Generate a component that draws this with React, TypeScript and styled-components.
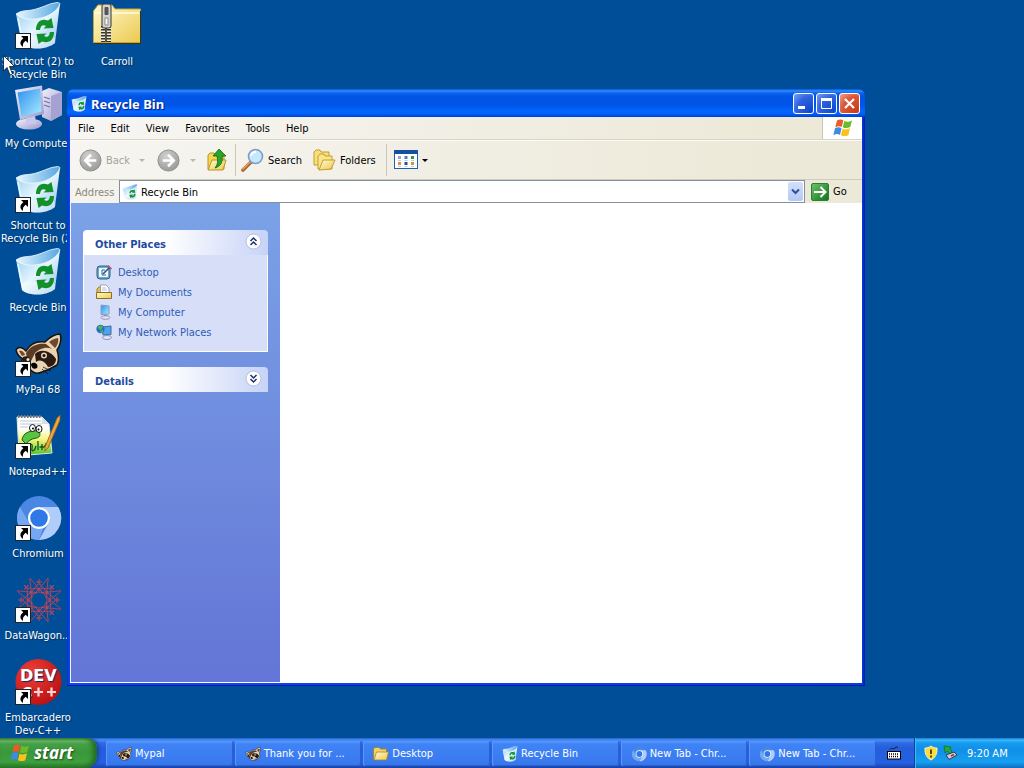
import React from "react";
import styled, { createGlobalStyle } from "styled-components";

const GlobalStyle = createGlobalStyle`
  * { box-sizing: border-box; }
  html, body { margin: 0; padding: 0; }
  body, button, input {
    font-family: "DejaVu Sans Condensed", "Noto Sans", sans-serif;
    font-size: 11px;
    line-height: 13px;
  }
  button { margin: 0; padding: 0; border: 0; background: none; color: inherit; }
  a { color: inherit; text-decoration: none; }
  svg { display: block; flex: none; }
`;

/* ---------- Desktop ---------- */

const Screen = styled.div`
  min-height: 100vh;
  display: flex;
  flex-direction: column;
  background: #004e98;
  overflow: hidden;
`;

const Desktop = styled.main`
  position: relative;
  flex: 1;
  display: flex;
  gap: 3px;
  padding-top: 2px;
`;

const IconColumn = styled.nav`
  width: 76px;
  display: grid;
  grid-auto-rows: 82px;
  align-content: start;
  height: 736px;
`;

const DesktopLink = styled.a`
  display: flex;
  flex-direction: column;
  align-items: center;
  gap: 5px;
  color: #fff;
  text-align: center;
  text-shadow: 1px 1px 1px #00305f;
`;

const LinkLabel = styled.span`
  white-space: pre;
`;

const Pointer = styled.svg`
  position: absolute;
  left: 3px;
  top: 55px;
  z-index: 5;
`;

/* ---------- Window ---------- */

const Window = styled.section`
  position: absolute;
  top: 89px;
  left: 67px;
  right: 159px;
  bottom: 52px;
  display: flex;
  flex-direction: column;
  padding: 0 3px 2px;
  background: linear-gradient(90deg, #0831d9, #0c48ee 3px, #0c3cdc calc(100% - 3px), #0019b4);
  border-bottom: 1px solid #0019b4;
  border-radius: 7px 7px 0 0;
`;

const TitleBar = styled.header`
  height: 28px;
  margin: 0 -3px;
  padding: 1px 5px 0 4px;
  display: flex;
  align-items: center;
  gap: 4px;
  border-radius: 7px 7px 0 0;
  background: linear-gradient(#0058e0, #2f8bff 2px, #0a62ee 4px, #0054e3 8px, #0055e8 16px, #0166ff 22px, #0161f8 25px, #003dd0);
`;

const Title = styled.h1`
  flex: 1;
  margin: 0;
  color: #fff;
  font-family: "Noto Sans", sans-serif;
  font-size: 13px;
  line-height: 16px;
  font-weight: 700;
  text-shadow: 1px 1px 1px #0a1883;
`;

const Controls = styled.div`
  display: flex;
  gap: 2px;
`;

const ControlButton = styled.button<{ $danger?: boolean }>`
  width: 21px;
  height: 21px;
  border: 1px solid #fff;
  border-radius: 3px;
  background: ${(p) =>
    p.$danger
      ? "radial-gradient(circle at 90% 90%, #cc3a18, #dc5436 60%, #f0a48c)"
      : "radial-gradient(circle at 90% 90%, #0d48d0, #2e62e0 60%, #7ba0f4)"};
`;

const MenuBar = styled.div`
  height: 23px;
  display: flex;
  justify-content: space-between;
  background: linear-gradient(90deg, #f7f6f3, #ece9d8 90%);
  border-bottom: 1px solid #d8d5c6;
`;

const Menu = styled.nav`
  display: flex;
  align-items: center;
  gap: 16px;
  padding-left: 8px;
`;

const MenuButton = styled.button`
  color: #000;
`;

const Throbber = styled.div`
  width: 40px;
  display: flex;
  align-items: center;
  justify-content: center;
  border-left: 1px solid #c8c5b4;
  background: #fff;
`;

const ToolBar = styled.div`
  height: 40px;
  display: flex;
  align-items: center;
  padding-left: 9px;
  background: linear-gradient(90deg, #f6f5f1, #ece9d8 90%);
  border-top: 1px solid #fbfaf6;
  border-bottom: 1px solid #d0cdbd;
`;

const ToolButton = styled.button<{ $width: number; $inset?: number; $muted?: boolean }>`
  width: ${(p) => p.$width}px;
  padding-left: ${(p) => p.$inset ?? 0}px;
  display: flex;
  align-items: center;
  gap: 4px;
  color: ${(p) => (p.$muted ? "#a5a396" : "#000")};
`;

const Separator = styled.i`
  width: 1px;
  height: 32px;
  background: #c9c6b6;
`;

const Caret = styled.i<{ $muted?: boolean }>`
  border: 3px solid transparent;
  border-top-color: ${(p) => (p.$muted ? "#b9b7ac" : "#000")};
  border-bottom: 0;
  margin-left: auto;
`;

const AddressBar = styled.form`
  height: 23px;
  display: flex;
  background: linear-gradient(90deg, #f4f3ee, #ece9d8 90%);
`;

const AddressLabel = styled.label`
  width: 49px;
  padding: 6px 0 0 5px;
  color: #8a887c;
`;

const AddressField = styled.div`
  flex: 1;
  display: flex;
  align-items: center;
  gap: 3px;
  padding: 0 1px 0 2px;
  background: #fff;
  border: 1px solid #848e9c;
`;

const AddressInput = styled.input`
  flex: 1;
  min-width: 0;
  padding: 2px 0 0;
  border: 0;
  background: none;
  color: #000;
  outline: 0;
`;

const DropButton = styled.button`
  width: 15px;
  height: 19px;
  display: grid;
  place-items: center;
  border-radius: 2px;
  background: linear-gradient(#d3e0fe, #b4c8f6);
`;

const GoButton = styled.button`
  width: 57px;
  display: flex;
  align-items: center;
  gap: 4px;
  padding-left: 6px;
  color: #000;
`;

const Body = styled.div`
  flex: 1;
  display: flex;
  background: #fff;
  border-left: 1px solid #f4f6ff;
  border-bottom: 1px solid #fff;
`;

const SidePane = styled.aside`
  width: 209px;
  padding: 27px 12px 0;
  display: flex;
  flex-direction: column;
  gap: 15px;
  background: linear-gradient(#7ba2e7, #6375d6);
`;

const Files = styled.div`
  flex: 1;
  background: #fff;
`;

const PanelHeader = styled.button`
  width: 100%;
  height: 25px;
  display: flex;
  align-items: center;
  justify-content: space-between;
  padding: 0 6px 2px 12px;
  border-radius: 4px 4px 0 0;
  background: linear-gradient(90deg, #fff 45%, #c6d3f7);
`;

const PanelTitle = styled.span`
  padding-top: 6px;
  color: #1f4ba3;
  font-weight: 700;
`;

const PanelBody = styled.div`
  height: 97px;
  display: flex;
  flex-direction: column;
  padding: 7px 12px;
  background: #d6dff7;
  border: 1px solid #fff;
  border-top: 0;
`;

const PlaceLink = styled.a`
  height: 20px;
  display: flex;
  align-items: center;
  gap: 6px;
  color: #2f5bb8;
`;

/* ---------- Taskbar ---------- */

const Taskbar = styled.footer`
  height: 30px;
  display: flex;
  background: linear-gradient(#1f5fd8, #4a8ff2 2px, #2f6be2 5px, #245edb 10px, #2560e0 25px, #1941a5);
`;

const StartButton = styled.button`
  width: 97px;
  display: flex;
  align-items: center;
  gap: 4px;
  padding-left: 10px;
  border-radius: 0 10px 12px 0;
  background: linear-gradient(#3c8a3c, #6cba6c 3px, #45a045 6px, #3a973a 14px, #3da03d 24px, #2a7a2a);
  box-shadow: inset -4px 0 5px #226c22, 2px 0 3px #1a46b0;
  color: #fff;
  font-family: "Noto Sans", sans-serif;
  font-size: 17px;
  line-height: 22px;
  font-style: italic;
  font-weight: 700;
  text-shadow: 1px 1px 2px #1b4a1b;
`;

const Tasks = styled.div`
  flex: 1;
  display: flex;
  gap: 2px;
  padding: 3px 0 2px 9px;
`;

const Task = styled.button`
  flex: 1 1 0;
  min-width: 0;
  display: flex;
  align-items: center;
  gap: 3px;
  padding-left: 10px;
  border-radius: 2px;
  color: #fff;
  white-space: nowrap;
  background: linear-gradient(#5a9bff, #3f83f6 3px, #3a7cf0 18px, #3676ea);
  box-shadow: inset 1px 0 0 #5c98fb, inset -1px -1px 0 #2a60cf;
`;

const Keyboard = styled.div`
  width: 38px;
  display: flex;
  align-items: center;
  padding-left: 11px;
`;

const Tray = styled.div`
  width: 110px;
  display: flex;
  align-items: center;
  gap: 4px;
  padding-left: 9px;
  color: #fff;
  border-left: 1px solid #0b3f96;
  background: linear-gradient(#0d7ad8, #3fb8f8 2px, #149bee 5px, #118ee8 12px, #16a0f0 24px, #0e6cc0);
  box-shadow: inset 1px 0 0 #35c0fa;
`;

const Clock = styled.time`
  margin-left: 5px;
`;

/* ---------- Drawings ---------- */

const Defs = styled.svg`
  position: absolute;
`;

const Gradients = () => (
  <Defs width="0" height="0" aria-hidden="true">
    <defs>
      <linearGradient id="bin" x1="0" y1="0" x2="1" y2="1">
        <stop offset="0" stopColor="#8cc8f2" />
        <stop offset=".5" stopColor="#e6f6ff" />
        <stop offset="1" stopColor="#84bdea" />
      </linearGradient>
      <linearGradient id="rim" x1="0" y1="0" x2="1" y2="0">
        <stop offset="0" stopColor="#e8f8ff" />
        <stop offset="1" stopColor="#56a6e2" />
      </linearGradient>
      <linearGradient id="crt" x1="0" y1="0" x2="1" y2="1">
        <stop offset="0" stopColor="#2f8ff0" />
        <stop offset="1" stopColor="#a8ecff" />
      </linearGradient>
      <linearGradient id="plastic" x1="0" y1="0" x2="1" y2="1">
        <stop offset="0" stopColor="#f2f1fc" />
        <stop offset="1" stopColor="#9a98cc" />
      </linearGradient>
      <linearGradient id="folder" x1="0" y1="0" x2="1" y2="1">
        <stop offset="0" stopColor="#fffbd0" />
        <stop offset="1" stopColor="#ecc94e" />
      </linearGradient>
      <linearGradient id="note" x1="0" y1="0" x2="0" y2="1">
        <stop offset="0" stopColor="#ffffff" />
        <stop offset=".3" stopColor="#ffffff" />
        <stop offset=".6" stopColor="#f4f47a" />
        <stop offset="1" stopColor="#46c42c" />
      </linearGradient>
      <radialGradient id="grey" cx=".4" cy=".3" r=".7">
        <stop offset="0" stopColor="#d2d2d0" />
        <stop offset="1" stopColor="#9b9b99" />
      </radialGradient>
      <radialGradient id="red" cx=".35" cy=".3" r=".8">
        <stop offset="0" stopColor="#ee4038" />
        <stop offset="1" stopColor="#b80d10" />
      </radialGradient>
      <linearGradient id="go" x1="0" y1="0" x2="1" y2="1">
        <stop offset="0" stopColor="#6cc46c" />
        <stop offset="1" stopColor="#0f7418" />
      </linearGradient>
    </defs>
  </Defs>
);

const ShortcutMark = () => (
  <g>
    <rect x="1.500" y="31.500" width="15" height="15" fill="#fff" stroke="#222" />
    <path d="M7 34h7v7l-2.300-2.300c-2.700 2-3 3.500-2.700 6.300C5.500 42.500 5.500 39.500 9.300 36.300z" fill="#000" />
  </g>
);

type Art = { size?: number; shortcut?: boolean };

const Bin = ({ size = 48, shortcut }: Art) => {
  const arrow = "M22 28C22 20 27 16 34 18.500L37.500 16L39.500 26L29.500 26.500L32 24C28.500 22 26.500 24 26 28z";
  return (
    <svg width={size} height={size} viewBox="0 0 48 48">
      <path d="M2 12C12 17 34 13 46 2L41 41C36 45 28 47 21 46.500C14 46 10 44 8 42z" fill="url(#bin)" />
      <path d="M2 12C8 8 12 9 18 8C28 6 36 1 41 1C44 0 46 1 46 2C40 17 12 22 2 12z" fill="url(#rim)" stroke="#f2fbff" strokeWidth=".8" />
      <path d="M8 36C14 30 22 36 28 34S36 33 41 36V41C36 45 28 47 21 46.500C14 46 10 44 8 42z" fill="#fff" opacity=".4" />
      <path d="M4 16L9 42" stroke="#fff" strokeWidth="1.500" opacity=".7" />
      <g fill="#12912a">
        <path d={arrow} />
        <path d={arrow} transform="rotate(180 31 29)" />
      </g>
      {shortcut && <ShortcutMark />}
    </svg>
  );
};

const Computer = ({ size = 48 }: Art) => (
  <svg width={size} height={size} viewBox="0 0 48 48">
    <path d="M28 7L35 4L48 8V31L37 37L28 33z" fill="url(#plastic)" />
    <path d="M37 12L48 8V31L37 37z" fill="#a5a2d2" />
    <path d="M30 13l6 2M30 17l6 2M30 21l6 2" stroke="#7370a8" strokeWidth="1.300" />
    <ellipse cx="15" cy="40" rx="13" ry="5.500" fill="url(#plastic)" />
    <path d="M12 32L21 31L22 40H12z" fill="#c9c7ea" />
    <path d="M1 6L28 1.500L30 30L6 36z" fill="url(#plastic)" />
    <path d="M3.500 8.500L26 4.500L27.500 27.500L7.500 32.500z" fill="url(#crt)" />
  </svg>
);

const Raccoon = ({ size = 48, shortcut }: Art) => (
  <svg width={size} height={size} viewBox="0 0 48 48">
    <path d="M2 20C4 16 9 17 12 21C16 14 23 11 31 12C35 8 41 4 46 4C48 9 46 16 43 20C45 26 45 31 43 35C36 39 32 41 28 42C22 45 17 42 15 37C8 36 6 32 9 29C5 27 3 24 2 20z" fill="#e9d3b4" stroke="#1a120c" strokeWidth="1.500" />
    <path d="M35 12C39 9 42 8 44 8C45 12 43 16 41 18z" fill="#6b4a30" />
    <path d="M5 21C8 20 10 22 11 25L8 26z" fill="#6b4a30" />
    <path d="M12 23C17 15 25 13 32 14L38 19C32 16 25 19 21 23L17 31L13 28z" fill="#5b3b24" />
    <path d="M21 24C27 18 37 21 42 29C42 33 39 37 34 37C31 31 26 29 22 32z" fill="#2a1a12" />
    <path d="M9 27C13 25 16 27 17 31L14 36C10 34 8 31 9 27z" fill="#2a1a12" />
    <circle cx="30" cy="25.500" r="3" fill="#e9d3b4" />
    <circle cx="30" cy="25.500" r="1.500" fill="#111" />
    <circle cx="14" cy="29.500" r="1.500" fill="#f4e8d0" />
    <path d="M17 34C20 31 25 34 23 38C20 40 17 38 17 34z" fill="#000" />
    <path d="M29 37l8 4M28 39l6 5" stroke="#15100c" strokeWidth=".8" />
    {shortcut && <ShortcutMark />}
  </svg>
);

const Notepad = () => (
  <svg width="48" height="48" viewBox="0 0 48 48">
    <path d="M3 5H28L35 12L38 41L14 43L5 41z" fill="url(#note)" stroke="#dfe8d8" />
    <path d="M4 4.500H28" stroke="#777" strokeWidth="3" strokeDasharray="1.500 1.500" />
    <path d="M6 9H27M6 12H28M6 15H14" stroke="#b9c6d8" />
    <path d="M28 5L35 12H28z" fill="#d8dde4" />
    <path d="M8 28C9 21 15 19 20 19C27 17 28 26 22 26C17 27 14 29 12 32z" fill="#57c443" stroke="#175e17" />
    <ellipse cx="18.500" cy="16" rx="3" ry="3.500" fill="#fff" stroke="#111" />
    <ellipse cx="25" cy="17" rx="3" ry="3.500" fill="#fff" stroke="#111" />
    <circle cx="19" cy="16.500" r="1" />
    <circle cx="24.500" cy="17.500" r="1" />
    <path d="M14 37c2-6 5-6 4-1s3 3 4-2M24 29v9M28 32v6M25.500 35h5M32 31v6M30 34h5" fill="none" stroke="#145214" strokeWidth="1.300" />
    <path d="M31 35L43 6L46 3L46 8L34 36L31 39z" fill="#efa63a" stroke="#8a5b1c" strokeWidth=".8" />
    <ShortcutMark />
  </svg>
);

const Chromium = ({ size = 48, shortcut }: Art) => (
  <svg width={size} height={size} viewBox="0 0 48 48">
    <circle cx="25" cy="24" r="22" fill="#4a86e4" />
    <path d="M25 13H44.200A22 22 0 0 1 25 46L34.500 29.500A11 11 0 0 0 25 13z" fill="#b0cdfa" />
    <path d="M6 13L15.500 29.500A11 11 0 0 0 29 34.300L25 46A22 22 0 0 1 6 13z" fill="#76a7f3" />
    <circle cx="25" cy="24" r="11" fill="#fff" />
    <circle cx="25" cy="24" r="8.800" fill="#2f78e8" />
    {shortcut && <ShortcutMark />}
  </svg>
);

const spokes = Array.from({ length: 8 }, (_, i) => i * 45);

const Wagon = () => (
  <svg width="48" height="48" viewBox="0 0 48 48">
    <g fill="none" strokeWidth="1">
      {spokes.map((angle) => (
        <g key={angle} transform={`rotate(${angle} 25 24)`}>
          <path d="M16 2L25 13L34 2M25 13L36 12M25 13L14 12" stroke="#a84460" />
          <path d="M22 6H28M25 3V9" stroke="#c04858" />
          <path d="M21 18L25 12L29 18M25 12V17" stroke="#c84650" />
        </g>
      ))}
    </g>
    <ShortcutMark />
  </svg>
);

const DevText = styled.text`
  font-family: "DejaVu Sans", sans-serif;
  font-weight: 700;
  fill: #fff;
`;

const DevCpp = () => (
  <svg width="48" height="48" viewBox="0 0 48 48">
    <circle cx="24.500" cy="24" r="23" fill="url(#red)" />
    <DevText x="6" y="23" fontSize="16">DEV</DevText>
    <DevText x="8" y="39" fontSize="14">C</DevText>
    <path d="M20 34h9M24.500 29.500v9M33 34h9M37.500 29.500v9" stroke="#ffd9d5" strokeWidth="2.200" />
    <ShortcutMark />
  </svg>
);

const ZipFolder = () => (
  <svg width="48" height="48" viewBox="0 0 48 48">
    <path d="M.5 40.500V9L5 3H19L22 7H47.500V40.500z" fill="url(#folder)" stroke="#c9a63a" />
    <path d="M1 41.500H47.500V9" fill="none" stroke="#3d3310" />
    <path d="M2 11H46" stroke="#fffde0" strokeWidth="1.500" />
    <path d="M8 22V40H12V22zM14 22V40H18V22z" fill="#f0edd8" />
    <path d="M10 24V40M16 24V40" stroke="#333" strokeWidth="4" strokeDasharray="1.500 1.500" />
    <path d="M13 24V40" stroke="#222" strokeWidth="1.500" />
    <rect x="9" y="2" width="9" height="24" rx="2" fill="#d4d4ce" stroke="#333" />
    <rect x="11.500" y="5" width="4" height="8" rx="1" fill="#555" />
    <rect x="12" y="16" width="3" height="7" fill="#f6f6f2" stroke="#555" strokeWidth=".6" />
  </svg>
);

const Flag = ({ size = 20 }: Art) => (
  <svg width={size} height={size} viewBox="0 0 20 20">
    <path d="M4 2.500C6.500 1 8.500 1.200 10.300 2.300L8.800 9C7 8 5 8 2.300 9.200z" fill="#ee5a24" />
    <path d="M11.300 2.800C13.500 4 16 4 19 2.500L17.300 9C14.500 10.500 12 10.300 9.800 9.200z" fill="#6fb92c" />
    <path d="M2 10.300C4.500 9 6.700 9 8.500 10.200L7 17C5 15.800 3 15.800.3 17.200z" fill="#3f8ae6" />
    <path d="M9.500 10.500C11.700 11.800 14 11.600 17 10.300L15.300 17.200C12.500 18.500 10.300 18.300 8 17.200z" fill="#fbc21a" />
  </svg>
);

const SmallFolder = () => (
  <svg width="16" height="16" viewBox="0 0 16 16">
    <path d="M.5 13V3L2 1.500H6L7.500 3H13.500V13z" fill="#f3d368" stroke="#a8842a" />
    <path d="M1 14L3.500 6H15.500L13.500 14z" fill="url(#folder)" stroke="#a8842a" strokeWidth=".8" />
  </svg>
);

const Round = ({ flip }: { flip?: boolean }) => (
  <svg width="23" height="23" viewBox="0 0 24 24">
    <circle cx="12" cy="12" r="11" fill="url(#grey)" stroke="#8e8e8c" />
    <path d="M12.500 6L6.500 12L12.500 18M7 12H18" transform={flip ? "rotate(180 12 12)" : undefined} fill="none" stroke="#fff" strokeWidth="2.600" />
  </svg>
);

const UpFolder = () => (
  <svg width="22" height="24" viewBox="0 0 22 24">
    <path d="M2 21V7L4 5H8L10 8H18V21z" fill="#f5d84e" stroke="#b8922a" />
    <path d="M2 22L6 12H20L17 22z" fill="url(#folder)" stroke="#b8922a" />
    <path d="M7 8L13 1L20 8H16C17 14 15 18 9 20C12 16 12 13 11 8z" fill="#28a428" stroke="#0d6a14" strokeWidth=".8" />
  </svg>
);

const Magnifier = () => (
  <svg width="24" height="24" viewBox="0 0 24 24">
    <path d="M11 14L3 22" stroke="#a8652e" strokeWidth="3.600" strokeLinecap="round" />
    <path d="M10 14L3 21" stroke="#e6a66a" strokeWidth="1.500" strokeLinecap="round" />
    <circle cx="15.500" cy="8.500" r="7" fill="#c4e8fc" stroke="#7d9cc8" strokeWidth="1.600" />
    <path d="M11 8a5 5 0 0 1 5-4" stroke="#fff" strokeWidth="2" fill="none" />
  </svg>
);

const Folders = () => (
  <svg width="23" height="22" viewBox="0 0 23 22">
    <path d="M1 16V3L3 1H7L8 3H16V16z" fill="#f7df7a" stroke="#c59c2e" />
    <path d="M5 20V7L7 5H11L12 7H19V20z" fill="#f9e68c" stroke="#c59c2e" />
    <path d="M6 21L10 11H22L18 20z" fill="url(#folder)" stroke="#c59c2e" />
  </svg>
);

const Views = () => (
  <svg width="24" height="20" viewBox="0 0 24 20">
    <rect x=".5" y=".5" width="23" height="18" fill="#fff" stroke="#1d5fb4" />
    <path d="M0 2H24" stroke="#1550a0" strokeWidth="4" />
    <path d="M4 7.500h3" stroke="#9aa0d8" strokeWidth="3" />
    <path d="M10.500 7.500h3" stroke="#5a78c0" strokeWidth="3" />
    <path d="M17 7.500h3" stroke="#2a9a4a" strokeWidth="3" />
    <path d="M4 13.500h3" stroke="#e08850" strokeWidth="3" />
    <path d="M10.500 13.500h3" stroke="#2050a8" strokeWidth="3" />
    <path d="M17 13.500h3" stroke="#b8a030" strokeWidth="3" />
    <path d="M4 10.500h3M10.500 10.500h3M17 10.500h3M4 16.500h3M10.500 16.500h3M17 16.500h3" stroke="#c4cadc" />
  </svg>
);

const Chevrons = ({ down }: { down?: boolean }) => (
  <svg width="17" height="17" viewBox="0 0 17 17">
    <circle cx="8.500" cy="8.500" r="7.500" fill="#fff" stroke="#b4bfdf" />
    <path d="M5.500 8L8.500 5L11.500 8M5.500 12L8.500 9L11.500 12" transform={down ? "rotate(180 8.500 8.500)" : undefined} fill="none" stroke="#1b2f6e" strokeWidth="1.500" />
  </svg>
);

const DesktopArt = () => (
  <svg width="16" height="16" viewBox="0 0 16 16">
    <rect x="1" y="2" width="13" height="13" rx="3" fill="#6fa8cc" stroke="#2c5f84" />
    <rect x="3" y="4" width="9" height="9" rx="1" fill="#f1faff" />
    <path d="M6 6v5h4M6 6h3" stroke="#2c6a96" fill="none" />
    <path d="M7 10L14 3" stroke="#2d4f8c" strokeWidth="1.600" />
    <path d="M12 1.500L15.500 5" stroke="#c05560" strokeWidth="1.500" />
  </svg>
);

const DocsArt = () => (
  <svg width="16" height="16" viewBox="0 0 16 16">
    <path d="M1 13V5L3 3H5V13z" fill="#e8bf4a" stroke="#8f6d1c" strokeWidth=".8" />
    <path d="M4.500 1H10L13 4V11H4.500z" fill="#fff" stroke="#8894a8" strokeWidth=".8" />
    <path d="M6 4h4M6 6h5" stroke="#9bb0d0" strokeWidth=".8" />
    <path d="M.5 14.500V8.500H15.500V14.500z" fill="url(#folder)" stroke="#8f6d1c" />
  </svg>
);

const ComputerArt = () => (
  <svg width="16" height="16" viewBox="0 0 16 16">
    <path d="M5 1L13 2V10L5 10.500z" fill="url(#crt)" stroke="#8a9ac4" />
    <path d="M8 10.500H11V13H8z" fill="#9a98c0" />
    <ellipse cx="9.500" cy="13.500" rx="4.500" ry="1.800" fill="#e4e2f2" stroke="#74729c" strokeWidth=".7" />
  </svg>
);

const NetworkArt = () => (
  <svg width="16" height="16" viewBox="0 0 16 16">
    <path d="M6 3L15 2V10.500L7 11z" fill="#48a6ee" stroke="#4a64a4" />
    <circle cx="4.500" cy="5" r="4.200" fill="#2c6cc4" />
    <path d="M1.500 3C3 1 6 1 7 3L5 6L3 5zM4 7l3-1v2L5 9z" fill="#4cb648" />
    <ellipse cx="11" cy="13.500" rx="4.500" ry="2" fill="#e4e2f2" stroke="#74729c" strokeWidth=".7" />
  </svg>
);

const KeyboardArt = () => (
  <svg width="14" height="14" viewBox="0 0 14 14">
    <path d="M3 3.500C5 1 6 4 8 2S10 2 11 1" stroke="#0c1c40" fill="none" />
    <rect x=".5" y="5.500" width="13" height="7.500" fill="#fff" stroke="#000" />
    <path d="M2 8h10M2 10.500h10" stroke="#000" strokeWidth="1.500" strokeDasharray="1 1" />
  </svg>
);

const Shield = () => (
  <svg width="14" height="16" viewBox="0 0 14 16">
    <path d="M7 1C9 2.500 11 3 13 3C13.500 9 11 13 7 15C3 13 .5 9 1 3C3 3 5 2.500 7 1z" fill="#fbdc3c" stroke="#f3eec8" />
    <path d="M7 4.500V9M7 10.500V12.500" stroke="#4a3800" strokeWidth="1.800" />
  </svg>
);

const Eject = () => (
  <svg width="16" height="16" viewBox="0 0 16 16">
    <path d="M4 10L12 7L15 10L7 14.500z" fill="#c8ccd4" stroke="#333b48" />
    <path d="M9 11l3-1.500" stroke="#a03040" strokeWidth="1.500" />
    <path d="M2 1L9 2L8 4C10 5 10 7 8 9C7 7 6 6 4.500 6.500L3 8z" fill="#28a83a" stroke="#0b6c20" strokeWidth=".7" />
  </svg>
);

/* ---------- Data ---------- */

const shortcuts = [
  { label: "Shortcut (2) to\nRecycle Bin", art: <Bin shortcut /> },
  { label: "My Computer", art: <Computer /> },
  { label: "Shortcut to\nRecycle Bin (2)", art: <Bin shortcut /> },
  { label: "Recycle Bin", art: <Bin /> },
  { label: "MyPal 68", art: <Raccoon shortcut /> },
  { label: "Notepad++", art: <Notepad /> },
  { label: "Chromium", art: <Chromium shortcut /> },
  { label: "DataWagon...", art: <Wagon /> },
  { label: "Embarcadero\nDev-C++", art: <DevCpp /> },
];

const places = [
  { label: "Desktop", art: <DesktopArt /> },
  { label: "My Documents", art: <DocsArt /> },
  { label: "My Computer", art: <ComputerArt /> },
  { label: "My Network Places", art: <NetworkArt /> },
];

const tasks = [
  { label: "Mypal", art: <Raccoon size={16} /> },
  { label: "Thank you for ...", art: <Raccoon size={16} /> },
  { label: "Desktop", art: <SmallFolder /> },
  { label: "Recycle Bin", art: <Bin size={16} /> },
  { label: "New Tab - Chr...", art: <Chromium size={16} /> },
  { label: "New Tab - Chr...", art: <Chromium size={16} /> },
];

const menus = ["File", "Edit", "View", "Favorites", "Tools", "Help"];

export default function App() {
  return (
    <Screen>
      <GlobalStyle />
      <Gradients />
      <Desktop>
        <IconColumn>
          {shortcuts.map((s) => (
            <DesktopLink href="#" key={s.label}>
              {s.art}
              <LinkLabel>{s.label}</LinkLabel>
            </DesktopLink>
          ))}
        </IconColumn>
        <IconColumn>
          <DesktopLink href="#">
            <ZipFolder />
            <LinkLabel>Carroll</LinkLabel>
          </DesktopLink>
        </IconColumn>

        <Window>
          <TitleBar>
            <Bin size={16} />
            <Title>Recycle Bin</Title>
            <Controls>
              <ControlButton aria-label="Minimize">
                <svg width="19" height="19" viewBox="0 0 19 19"><path d="M4 13.500H11" stroke="#fff" strokeWidth="3" /></svg>
              </ControlButton>
              <ControlButton aria-label="Maximize">
                <svg width="19" height="19" viewBox="0 0 19 19"><path d="M4.500 5V14.500H14.500V5" stroke="#fff" fill="none" /><path d="M4 5.500H15" stroke="#fff" strokeWidth="3" /></svg>
              </ControlButton>
              <ControlButton $danger aria-label="Close">
                <svg width="19" height="19" viewBox="0 0 19 19"><path d="M5 5L14 14M14 5L5 14" stroke="#fff" strokeWidth="2.200" /></svg>
              </ControlButton>
            </Controls>
          </TitleBar>

          <MenuBar>
            <Menu>
              {menus.map((m) => (
                <MenuButton key={m}>{m}</MenuButton>
              ))}
            </Menu>
            <Throbber><Flag /></Throbber>
          </MenuBar>

          <ToolBar>
            <ToolButton $width={66} $muted>
              <Round />
              Back
              <Caret $muted />
            </ToolButton>
            <ToolButton $width={51} $inset={12} $muted aria-label="Forward">
              <Round flip />
              <Caret $muted />
            </ToolButton>
            <ToolButton $width={39} $inset={10} aria-label="Up">
              <UpFolder />
            </ToolButton>
            <Separator />
            <ToolButton $width={77} $inset={4}>
              <Magnifier />
              Search
            </ToolButton>
            <ToolButton $width={73}>
              <Folders />
              Folders
            </ToolButton>
            <Separator />
            <ToolButton $width={38} $inset={7} aria-label="Views">
              <Views />
              <Caret />
            </ToolButton>
          </ToolBar>

          <AddressBar onSubmit={(e) => e.preventDefault()}>
            <AddressLabel htmlFor="address">Address</AddressLabel>
            <AddressField>
              <Bin size={16} />
              <AddressInput id="address" defaultValue="Recycle Bin" />
              <DropButton type="button" aria-label="Show addresses">
                <svg width="9" height="7" viewBox="0 0 9 7"><path d="M1 1.500L4.500 5L8 1.500" fill="none" stroke="#33508c" strokeWidth="2" /></svg>
              </DropButton>
            </AddressField>
            <GoButton>
              <svg width="18" height="18" viewBox="0 0 18 18">
                <rect x=".5" y=".5" width="17" height="17" rx="1.500" fill="url(#go)" stroke="#2d7d34" />
                <path d="M3 9H14M9.500 4L14.500 9L9.500 14" fill="none" stroke="#fff" strokeWidth="2" />
              </svg>
              Go
            </GoButton>
          </AddressBar>

          <Body>
            <SidePane>
              <section>
                <PanelHeader aria-expanded="true">
                  <PanelTitle>Other Places</PanelTitle>
                  <Chevrons />
                </PanelHeader>
                <PanelBody>
                  {places.map((p) => (
                    <PlaceLink href="#" key={p.label}>
                      {p.art}
                      {p.label}
                    </PlaceLink>
                  ))}
                </PanelBody>
              </section>
              <section>
                <PanelHeader aria-expanded="false">
                  <PanelTitle>Details</PanelTitle>
                  <Chevrons down />
                </PanelHeader>
              </section>
            </SidePane>
            <Files />
          </Body>
        </Window>

        <Pointer width="13" height="22" viewBox="0 0 13 22" aria-hidden="true">
          <path d="M.5 .5V16L4 12.500L7 20L9.500 19L6.500 11.500H11.500z" fill="#fff" stroke="#111" strokeWidth=".8" />
        </Pointer>
      </Desktop>

      <Taskbar>
        <StartButton>
          <Flag />
          start
        </StartButton>
        <Tasks>
          {tasks.map((t, i) => (
            <Task key={i}>
              {t.art}
              {t.label}
            </Task>
          ))}
        </Tasks>
        <Keyboard><KeyboardArt /></Keyboard>
        <Tray>
          <Shield />
          <Eject />
          <Clock>9:20 AM</Clock>
        </Tray>
      </Taskbar>
    </Screen>
  );
}
